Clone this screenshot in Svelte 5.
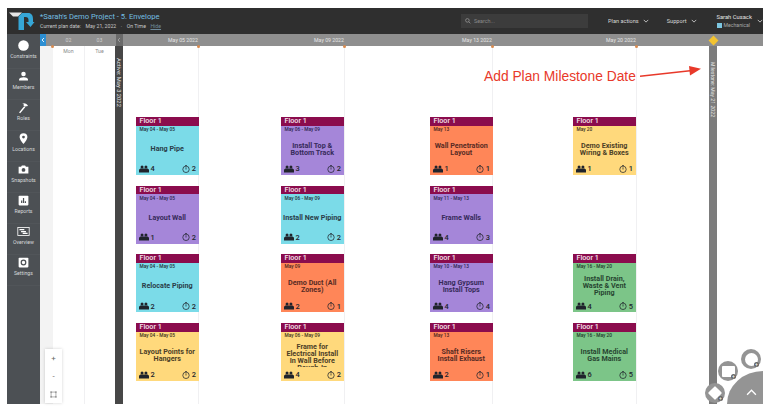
<script lang="ts">
  const navItems = ['Constraints', 'Members', 'Roles', 'Locations', 'Snapshots', 'Reports', 'Overview', 'Settings']

  const ticks = [
    { label: 'May 05 2022', x: 198 },
    { label: 'May 09 2022', x: 344 },
    { label: 'May 13 2022', x: 492 },
    { label: 'May 20 2022', x: 636 },
  ]

  const cards = [
    { col: 1, row: 1, color: 'cyan', dates: 'May 04 - May 05', title: 'Hang Pipe', crew: 4, days: 2 },
    { col: 2, row: 1, color: 'purple', dates: 'May 06 - May 09', title: 'Install Top & Bottom Track', crew: 3, days: 2 },
    { col: 3, row: 1, color: 'orange', dates: 'May 13', title: 'Wall Penetration Layout', crew: 1, days: 1 },
    { col: 4, row: 1, color: 'yellow', dates: 'May 20', title: 'Demo Existing Wiring & Boxes', crew: 1, days: 1 },
    { col: 1, row: 2, color: 'purple', dates: 'May 04 - May 05', title: 'Layout Wall', crew: 1, days: 2 },
    { col: 2, row: 2, color: 'cyan', dates: 'May 06 - May 09', title: 'Install New Piping', crew: 2, days: 2 },
    { col: 3, row: 2, color: 'purple', dates: 'May 11 - May 13', title: 'Frame Walls', crew: 4, days: 3 },
    { col: 1, row: 3, color: 'cyan', dates: 'May 04 - May 05', title: 'Relocate Piping', crew: 2, days: 2 },
    { col: 2, row: 3, color: 'orange', dates: 'May 09', title: 'Demo Duct (All Zones)', crew: 2, days: 1 },
    { col: 3, row: 3, color: 'purple', dates: 'May 10 - May 13', title: 'Hang Gypsum Install Tops', crew: 4, days: 4 },
    { col: 4, row: 3, color: 'green', dates: 'May 16 - May 20', title: 'Install Drain, Waste & Vent Piping', crew: 4, days: 5 },
    { col: 1, row: 4, color: 'yellow', dates: 'May 04 - May 05', title: 'Layout Points for Hangers', crew: 2, days: 2 },
    { col: 2, row: 4, color: 'yellow', dates: 'May 06 - May 09', title: 'Frame for Electrical Install In Wall Before Rough-In', crew: 4, days: 2 },
    { col: 3, row: 4, color: 'orange', dates: 'May 13', title: 'Shaft Risers Install Exhaust', crew: 2, days: 1 },
    { col: 4, row: 4, color: 'green', dates: 'May 16 - May 20', title: 'Install Medical Gas Mains', crew: 6, days: 5 },
  ]
</script>

{#snippet chevron()}
  <svg class="chev" viewBox="0 0 8 5" width="6" height="4"><path d="M1 1l3 3 3-3" fill="none" stroke="currentColor" stroke-width="1.1"/></svg>
{/snippet}

{#snippet navIcon(name)}
  <svg viewBox="0 0 16 16" width="13" height="13">
    {#if name === 'Constraints'}
      <circle cx="8" cy="8" r="6.5" fill="#fff"/>
    {:else if name === 'Members'}
      <circle cx="8" cy="5" r="2.8" fill="#fff"/><path d="M2.500 13v-1.400c0-2 3.400-2.800 5.500-2.800s5.500.8 5.500 2.800V13z" fill="#fff"/>
    {:else if name === 'Roles'}
      <path d="M2.500 14l6.300-7.500 1.400 1.200L3.900 15.200zM6 3.500c2.500-1.500 5-1 7.500 2l-1.300 1.300-1-.6-1 1-2.400-2 .6-1.100C7.600 3.400 6.900 3.400 6 3.500z" fill="#fff"/>
    {:else if name === 'Locations'}
      <path d="M8 1.500a4.800 4.800 0 0 0-4.800 4.800C3.200 9.700 8 14.800 8 14.800s4.800-5.100 4.800-8.500A4.800 4.800 0 0 0 8 1.500z" fill="#fff"/><circle cx="8" cy="6.200" r="1.700" fill="#4c5054"/>
    {:else if name === 'Snapshots'}
      <path d="M2 4.500h3l1-1.500h4l1 1.500h3V13H2z" fill="#fff"/><circle cx="8" cy="8.500" r="2.300" fill="#4c5054"/>
    {:else if name === 'Reports'}
      <rect x="2" y="2" width="12" height="12" rx="1" fill="#fff"/><path d="M5 11V8h1.500v3zM7.300 11V5h1.500v6zM9.600 11V9h1.500v2z" fill="#4c5054"/>
    {:else if name === 'Overview'}
      <rect x="1" y="3" width="14" height="10" fill="none" stroke="#fff" stroke-width="1"/><path d="M3 5h6v1.500H3zM5 7.300h6v1.500H5zM7 9.600h6v1.500H7z" fill="#fff"/>
    {:else}
      <rect x="2" y="2" width="12" height="12" rx="1" fill="#fff"/><circle cx="8" cy="8" r="2.800" fill="none" stroke="#4c5054" stroke-width="1.500"/>
    {/if}
  </svg>
{/snippet}

<div class="page">
  <header class="topbar">
    <svg class="logo" viewBox="0 0 26 20" width="26" height="20">
      <path d="M0 1.500h13L9 5.500H4z" fill="#e6e6e6"/>
      <path d="M9.500 5.500L13 2h6c3.500 0 5 2.500 5 6v3h1.500l-4 5-4.500-5h2.500V9c0-2-1-3-3-3H15v13H9.500z" fill="#36a6d6"/>
    </svg>
    <div class="project">
      <div class="project-name">*Sarah's Demo Project - 5. Envelope</div>
      <div class="project-meta">
        <span>Current plan date:</span><span>May 21, 2022</span><span>·</span><span>On Time</span><span class="hide">Hide</span>
      </div>
    </div>
    <div class="search">
      <svg viewBox="0 0 10 10" width="6" height="6"><circle cx="4" cy="4" r="3" fill="none" stroke="#9a9a9a" stroke-width="1.200"/><path d="M6.300 6.300L9 9" stroke="#9a9a9a" stroke-width="1.200"/></svg>
      <span>Search...</span>
    </div>
    <div class="menu plan">Plan actions {@render chevron()}</div>
    <div class="menu support">Support {@render chevron()}</div>
    <div class="user">
      <div>
        <div class="user-name">Sarah Cusack</div>
        <div class="user-trade"><i></i>Mechanical</div>
      </div>
      {@render chevron()}
    </div>
  </header>

  <div class="body">
    <nav class="sidebar">
      {#each navItems as item}
        <div class="nav-item">
          {@render navIcon(item)}
          <span>{item}</span>
        </div>
      {/each}
    </nav>

    <main class="plan-area">
      <div class="datebar">
        <div class="collapse"><svg viewBox="0 0 6 8" width="4" height="6"><path d="M4.500 1L1.500 4l3 3" fill="none" stroke="#fff" stroke-width="1.300"/></svg></div>
        <div class="day">02</div>
        <div class="day">03</div>
        <div class="active-head"><svg viewBox="0 0 6 8" width="4" height="6"><path d="M4.500 1L1.500 4l3 3" fill="none" stroke="#aaa" stroke-width="1.200"/></svg></div>
        {#each ticks as tick}
          <div class="tick-label" style="left: {tick.x - 40}px">{tick.label}</div>
        {/each}
      </div>

      <div class="canvas">
        <div class="past"></div>
        <div class="weekday mon">Mon</div>
        <div class="weekday tue">Tue</div>
        <div class="line" style="left: 44px"></div>
        <i class="pin" style="left: 12px"></i>
        {#each ticks as tick}
          <div class="line" style="left: {tick.x - 40}px"></div>
          <i class="pin" style="left: {tick.x - 40}px"></i>
        {/each}
        <div class="marker active"><span>Active: May 3 2022</span></div>
        <div class="marker milestone"><span>Milestone: May 21 2022</span></div>

        <div class="cards">
          {#each cards as card}
            <article class="card {card.color}" style="grid-column: {card.col}; grid-row: {card.row}">
              <div class="card-head">Floor 1</div>
              <div class="card-dates">{card.dates}</div>
              <div class="card-title"><span>{card.title}</span></div>
              <div class="card-foot">
                <span class="stat">
                  <svg viewBox="0 0 18 13" width="10" height="8"><circle cx="5.500" cy="2.800" r="2.700"/><circle cx="12.500" cy="2.800" r="2.700"/><path d="M0 13V8.500c0-1.800 2-2.800 4-2.800h10c2 0 4 1 4 2.800V13z"/></svg>
                  {card.crew}
                </span>
                <span class="stat">
                  <svg viewBox="0 0 12 12" width="8" height="8"><circle cx="6" cy="6.500" r="4.800" fill="none" stroke="currentColor" stroke-width="1.100"/><path d="M6 3.500v3.300M4.500 .6h3" fill="none" stroke="currentColor" stroke-width="1.100"/></svg>
                  {card.days}
                </span>
              </div>
            </article>
          {/each}
        </div>

        <div class="zoom">
          <div>+</div>
          <div>-</div>
          <div><svg viewBox="0 0 10 10" width="7" height="7"><rect x="1.500" y="1.500" width="7" height="7" fill="none" stroke="#777" stroke-width=".8"/><path d="M0 1.500h3M1.500 0v3M7 1.500h3M8.500 0v3M0 8.500h3M1.500 7v3M7 8.500h3M8.500 7v3" stroke="#777" stroke-width=".6"/></svg></div>
        </div>

        <div class="note">Add Plan Milestone Date</div>
        <svg class="note-arrow" viewBox="0 0 62 12" width="62" height="12">
          <path d="M0 10.200L50 4.800" stroke="#e8392a" stroke-width="1.500"/>
          <path d="M61 2.800L49 0l1 9.500z" fill="#e8392a"/>
        </svg>

        <div class="fab">
          <svg viewBox="0 0 10 6" width="11" height="7"><path d="M1 5l4-4 4 4" fill="none" stroke="#fff" stroke-width="1.200"/></svg>
        </div>
        <div class="fab-btn one"><i class="shape round"></i><b>+</b></div>
        <div class="fab-btn two"><i class="shape rect"></i><b>+</b></div>
        <div class="fab-btn three"><i class="shape diamond"></i><b>+</b></div>
      </div>
    </main>
  </div>
</div>

<style>
  :global(body) {
    background: #fff;
  }

  .page {
    width: 768px;
    height: 409px;
    box-sizing: border-box;
    padding: 8px 5px 5px 7px;
    display: flex;
    flex-direction: column;
    overflow: hidden;
    font-family: Roboto, "Liberation Sans", sans-serif;
  }

  .topbar {
    height: 26px;
    flex: none;
    display: flex;
    align-items: center;
    background: #2f2f2f;
    color: #d8d8d8;
  }

  .logo {
    margin-left: 2px;
    margin-right: 5px;
    flex: none;
  }

  .project {
    width: 421px;
    flex: none;
  }

  .project-name {
    font-size: 7.6px;
    line-height: 10px;
    color: #74bfe2;
  }

  .project-meta {
    display: flex;
    gap: 4.500px;
    font-size: 5.200px;
    line-height: 8px;
    color: #c8c8c8;
  }

  .hide {
    color: #6f8b9c;
    text-decoration: underline;
  }

  .search {
    width: 127px;
    height: 14px;
    flex: none;
    box-sizing: border-box;
    padding-left: 4px;
    display: flex;
    align-items: center;
    gap: 3px;
    background: #3c3c3c;
    color: #8a8a8a;
    font-size: 5.400px;
  }

  .menu {
    display: flex;
    align-items: center;
    gap: 4px;
    font-size: 5.600px;
    white-space: nowrap;
  }

  .plan {
    margin-left: 20px;
  }

  .support {
    margin-left: 18px;
  }

  .user {
    margin-left: 20px;
    display: flex;
    align-items: center;
    gap: 5px;
    font-size: 5.800px;
    white-space: nowrap;
  }

  .user-name {
    line-height: 8px;
    color: #e2e2e2;
  }

  .user-trade {
    display: flex;
    align-items: center;
    gap: 2px;
    font-size: 5.200px;
    line-height: 8px;
    color: #a8a8a8;
  }

  .user-trade i {
    width: 5px;
    height: 5px;
    background: #7cc6e0;
  }

  .body {
    flex: 1;
    min-height: 0;
    display: flex;
  }

  .sidebar {
    width: 33px;
    flex: none;
    background: #4c5054;
    color: #d6d8da;
    padding-top: 4px;
  }

  .nav-item {
    height: 31px;
    box-sizing: border-box;
    display: flex;
    flex-direction: column;
    align-items: center;
    justify-content: flex-start;
    gap: 1px;
    padding-top: 1px;
    font-size: 5.200px;
    line-height: 7px;
    border-bottom: 1px solid rgba(255, 255, 255, .03);
  }

  .plan-area {
    flex: 1;
    min-width: 0;
    display: flex;
    flex-direction: column;
    position: relative;
  }

  .datebar {
    height: 12px;
    flex: none;
    position: relative;
    display: flex;
    background: #8f8f8f;
    color: #e6e6e6;
    font-size: 5.200px;
    line-height: 12px;
  }

  .collapse {
    width: 6px;
    margin-right: 7px;
    background: #2c8fd3;
    display: flex;
    align-items: center;
    justify-content: center;
  }

  .day {
    width: 31px;
    text-align: center;
    color: #d0d0d0;
  }

  .active-head {
    width: 7.500px;
    margin-left: 0.500px;
    background: #6a6a6a;
    display: flex;
    align-items: center;
    justify-content: center;
  }

  .tick-label {
    position: absolute;
    top: 0;
    transform: translateX(-100%);
    width: 60px;
    text-align: center;
    white-space: nowrap;
    translate: 15px 0;
  }

  .canvas {
    flex: 1;
    position: relative;
    background: #fff;
  }

  .past {
    position: absolute;
    left: 0;
    top: 0;
    bottom: 0;
    width: 13px;
    background: #f3f3f3;
  }

  .weekday {
    position: absolute;
    top: 2px;
    width: 31px;
    text-align: center;
    font-size: 5.200px;
    color: #8a8a8a;
  }

  .mon {
    left: 13px;
  }

  .tue {
    left: 44px;
  }

  .line {
    position: absolute;
    top: 0;
    bottom: 0;
    width: 1px;
    margin-left: -0.500px;
    background: #f0f0f2;
  }

  .pin {
    position: absolute;
    top: -1px;
    width: 3px;
    height: 3px;
    margin-left: -1.500px;
    border-radius: 50%;
    background: #d98a4e;
  }

  .marker {
    position: absolute;
    top: 0;
    bottom: 0;
    color: #e4e4e4;
    font-size: 5.200px;
    display: flex;
    justify-content: center;
  }

  .marker span {
    writing-mode: vertical-rl;
    white-space: nowrap;
  }

  .active {
    left: 75px;
    width: 7.500px;
    background: #474747;
    padding-top: 12px;
    box-sizing: border-box;
    font-size: 5.800px;
  }

  .milestone {
    left: 669px;
    width: 8px;
    background: #7c7c7c;
    padding-top: 16px;
    box-sizing: border-box;
  }

  .milestone::before {
    content: '';
    position: absolute;
    top: -9.500px;
    left: 0.500px;
    width: 7px;
    height: 7px;
    background: #f2c330;
    transform: rotate(45deg);
  }

  .cards {
    position: absolute;
    left: 96px;
    top: 71px;
    display: grid;
    grid-template-columns: 145px 149px 143px 63px;
    grid-template-rows: repeat(4, 58px);
    row-gap: 10.700px;
  }

  .card {
    width: 62.500px;
    height: 58px;
    display: flex;
    flex-direction: column;
    overflow: hidden;
    color: #23303a;
  }

  .cyan {
    background: #7bdbe8;
  }

  .purple {
    background: #a586d9;
    color: #2d2350;
  }

  .orange {
    background: #ff8658;
    color: #4a2420;
  }

  .yellow {
    background: #ffd97c;
    color: #3c3220;
  }

  .green {
    background: #7cc588;
    color: #1e3a2a;
  }

  .card-head {
    height: 8.500px;
    flex: none;
    padding-left: 3.500px;
    background: #8b0c4d;
    color: #f5e6ee;
    font-size: 7.200px;
    font-weight: 500;
    line-height: 8.500px;
  }

  .card-dates {
    flex: none;
    height: 6px;
    padding: 1.500px 0 0 3.500px;
    font-size: 4.800px;
    line-height: 6px;
    font-weight: 500;
  }

  .card-title {
    height: 24px;
    margin-top: 3.500px;
    flex: none;
    padding: 0 1.500px;
    display: flex;
    align-items: safe center;
    justify-content: center;
    overflow: hidden;
    text-align: center;
    font-size: 7.200px;
    font-weight: 700;
    line-height: 7px;
    opacity: .92;
  }

  .card-foot {
    flex: 1;
    display: flex;
    align-items: center;
    justify-content: space-between;
    padding: 2px 2.500px 0 3px;
    font-size: 7.400px;
    font-weight: 500;
  }

  .stat {
    display: flex;
    align-items: center;
    gap: 1.500px;
    color: #20242c;
  }

  .stat svg {
    fill: currentColor;
  }

  .zoom {
    position: absolute;
    left: 5px;
    bottom: 1px;
    width: 17px;
    background: #fff;
    box-shadow: 0 0 3px rgba(0, 0, 0, .18);
    color: #666;
    font-size: 8px;
  }

  .zoom div {
    height: 18px;
    display: flex;
    align-items: center;
    justify-content: center;
  }

  .note {
    position: absolute;
    left: 444px;
    top: 23px;
    color: #e8392a;
    font-family: "Liberation Sans", Arial, sans-serif;
    font-size: 13.800px;
    line-height: 15px;
    white-space: nowrap;
  }

  .note-arrow {
    position: absolute;
    left: 600px;
    top: 20px;
  }

  .fab {
    position: absolute;
    right: 0;
    bottom: 0;
    width: 36px;
    height: 33px;
    border-top-left-radius: 36px 33px;
    background: #949494;
    display: flex;
    align-items: flex-end;
    justify-content: flex-end;
  }

  .fab svg {
    margin: 0 6px 8px 0;
  }

  .fab-btn {
    position: absolute;
    width: 20px;
    height: 20px;
    border-radius: 50%;
    background: #949494;
    display: flex;
    align-items: center;
    justify-content: center;
  }

  .fab-btn b {
    position: absolute;
    right: 2px;
    bottom: 2px;
    width: 5px;
    height: 5px;
    border-radius: 50%;
    background: #666;
    color: #fff;
    font-size: 5px;
    font-weight: 400;
    line-height: 5px;
    text-align: center;
  }

  .one {
    left: 701px;
    top: 303px;
  }

  .two {
    left: 678px;
    top: 315px;
  }

  .three {
    left: 665px;
    top: 337px;
  }

  .shape {
    display: block;
    background: #fff;
  }

  .round {
    width: 13px;
    height: 13px;
    border-radius: 50%;
  }

  .rect {
    width: 13px;
    height: 11px;
    border-radius: 1px;
  }

  .diamond {
    width: 10px;
    height: 10px;
    border-radius: 1px;
    transform: rotate(45deg);
  }
</style>
